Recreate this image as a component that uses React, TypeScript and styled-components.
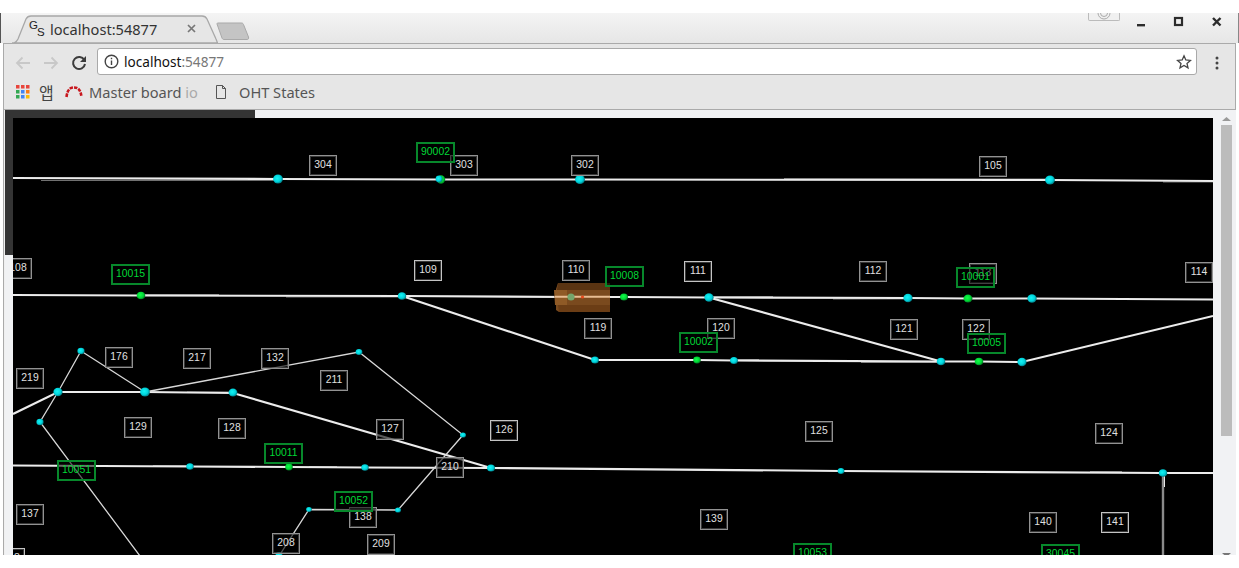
import styled, { createGlobalStyle } from "styled-components";

const GlobalStyle = createGlobalStyle`
  html, body {
    margin: 0;
    padding: 0;
    background: #fff;
    overflow: hidden;
  }
  * { box-sizing: border-box; }
`;

const Page = styled.div`
  width: 1239px;
  height: 568px;
  padding-top: 13px;
  background: #fff;
  font-family: "Noto Sans", "Noto Sans CJK KR", sans-serif;
`;

const TitleBar = styled.div`
  position: relative;
  height: 30px;
  display: flex;
  align-items: flex-end;
  padding-left: 11px;
  background: linear-gradient(#f4f4f4, #e6e6e6);
  border-left: 1px solid #555;
  border-right: 1px solid #888;
`;

const Tab = styled.div`
  position: relative;
  width: 206px;
  height: 30px;
  display: flex;
  align-items: center;
  padding: 0 0 0 17px;
`;

const TabShape = styled.svg`
  position: absolute;
  left: 0;
  top: 0;
`;

const Favicon = styled.div`
  position: relative;
  width: 21px;
  height: 24px;
  font: 11.5px "Liberation Sans", sans-serif;
  color: #222;
`;

const FaviconLetter = styled.span<{ $low?: boolean }>`
  position: absolute;
  left: ${(p) => (p.$low ? 8 : 0)}px;
  top: ${(p) => (p.$low ? 10 : 3)}px;
`;

const TabTitle = styled.span`
  position: relative;
  font-size: 14.6px;
  line-height: 20px;
  color: #333;
  width: 137px;
  margin-top: 1px;
`;

const TabClose = styled.svg`
  position: relative;
`;

const NewTab = styled.svg`
  margin: 0 0 2px -4px;
`;

const HiddenPopup = styled.div`
  position: absolute;
  left: 1087px;
  top: 0;
  width: 32px;
  height: 8px;
  background: #f0f0f0;
  border: 1px solid #bbb;
  border-top: none;
  border-radius: 0 0 2px 2px;
  overflow: hidden;
  display: flex;
  justify-content: center;
`;

const WindowControls = styled.div`
  position: absolute;
  left: 1129px;
  top: 3px;
  display: flex;
  gap: 16px;
`;

const Toolbar = styled.div`
  height: 38px;
  margin: 0 3px;
  display: flex;
  align-items: center;
  background: #e6e6e6;
  border-left: 1px solid #aaa;
  border-right: 1px solid #aaa;
  border-top: 1px solid #aaa;
  padding-left: 11px;
  gap: 12px;
`;

const NavIcon = styled.svg`
  flex: none;
`;

const MenuDots = styled(NavIcon)`
  margin-left: 6px;
`;

const UrlBox = styled.div`
  width: 1100px;
  height: 27px;
  margin: 0 0 2px -2px;
  display: flex;
  align-items: center;
  background: #fff;
  border: 1px solid #a9a9a9;
  border-radius: 3px;
  padding: 0 4px 0 6px;
`;

const UrlText = styled.div`
  flex: 1;
  margin-left: 5px;
  font-size: 13.6px;
  color: #111;
`;

const UrlPort = styled.span`
  color: #777;
`;

const BookmarkBar = styled.div`
  height: 29px;
  margin: 0 3px;
  display: flex;
  align-items: center;
  background: #e6e6e6;
  border-left: 1px solid #aaa;
  border-right: 1px solid #aaa;
  border-bottom: 1px solid #aaa;
  padding: 0 0 6px 12px;
`;

const BookmarkLabel = styled.span<{ $w: number; $gap: number }>`
  display: block;
  width: ${(p) => p.$w}px;
  margin-left: ${(p) => p.$gap}px;
  font-size: 14.6px;
  color: #555;
  white-space: nowrap;
  overflow: hidden;
`;

const AppsLabel = styled.span`
  width: 26px;
  margin-left: 9px;
  font: 16px "Noto Sans CJK KR", sans-serif;
  color: #444;
`;

const FadedText = styled.span`
  color: #aaa;
`;

const Viewport = styled.div`
  display: grid;
  grid-template-columns: 1px 1px 8px 1200px 23px;
  grid-template-rows: 8px 437px;
  margin-left: 3px;
  width: 1233px;
  height: 445px;
`;

const EdgeLine = styled.div`
  grid-row: 1 / 3;
  background: #aaa;
`;

const EdgeGap = styled.div`
  grid-row: 1 / 3;
  background: #efefef;
`;

const TopRail = styled.div`
  grid-column: 3 / 5;
  background: linear-gradient(to right, #343434 250px, #f1f2f4 250px);
`;

const LeftRail = styled.div`
  background: linear-gradient(#343434 137px, #f1f2f4 137px);
`;

const Canvas = styled.div`
  position: relative;
  overflow: hidden;
  background: #000;
`;

const Tracks = styled.svg`
  position: absolute;
  left: 0;
  top: 0;
`;

const Tag = styled.div<{ $x: number; $y: number; $bright?: boolean }>`
  position: absolute;
  left: ${(p) => p.$x - 13}px;
  top: ${(p) => p.$y - 118}px;
  width: 28px;
  height: 21px;
  text-align: center;
  font: 10.4px/17px "Liberation Sans", sans-serif;
  color: #e0e0e0;
  background: rgba(0, 0, 0, 0.62);
  border: 1px solid ${(p) => (p.$bright ? "#c4c4c4" : "#929292")};
  box-shadow: inset 0 0 0 1px rgba(140, 140, 140, 0.4);
`;

const GreenTag = styled(Tag)`
  width: 39px;
  color: #00d836;
  border: 2px solid #07882b;
  line-height: 16px;
  box-shadow: none;
  background: rgba(0, 0, 0, 0.55);
`;

const Scrollbar = styled.div`
  grid-row: 1 / 3;
  grid-column: 5;
  display: flex;
  flex-direction: column;
  align-items: center;
  background: #f1f2f4;
  padding: 7px 0 0 3px;
`;

const ScrollThumb = styled.div`
  width: 11px;
  height: 311px;
  margin-top: 4px;
  background: #bcbcbc;
`;

const ScrollDown = styled.svg`
  margin-top: auto;
`;

const tags: [string, number, number, boolean?][] = [
  ["304", 309, 155],
  ["303", 450, 155],
  ["302", 571, 155],
  ["105", 979, 156],
  ["108", 4, 258],
  ["109", 414, 260, true],
  ["110", 562, 260],
  ["111", 684, 261, true],
  ["112", 859, 261],
  ["113", 969, 263],
  ["114", 1185, 262],
  ["119", 584, 318],
  ["120", 707, 318],
  ["121", 890, 319],
  ["122", 962, 319],
  ["176", 105, 347],
  ["217", 183, 348],
  ["132", 261, 348],
  ["219", 16, 368],
  ["211", 320, 370],
  ["129", 124, 417],
  ["128", 218, 418],
  ["127", 376, 419],
  ["126", 490, 420, true],
  ["125", 805, 421],
  ["124", 1095, 423],
  ["210", 436, 457],
  ["137", 16, 504],
  ["138", 349, 507],
  ["139", 700, 509],
  ["140", 1029, 512],
  ["141", 1101, 512, true],
  ["208", 272, 533],
  ["209", 367, 534],
  ["218", -3, 548, true],
];

const greenTags: [string, number, number][] = [
  ["90002", 416, 142],
  ["10015", 111, 264],
  ["10008", 605, 266],
  ["10001", 956, 267],
  ["10002", 679, 332],
  ["10005", 967, 333],
  ["10011", 264, 443],
  ["10051", 57, 460],
  ["10052", 334, 491],
  ["10053", 793, 543],
  ["30045", 1041, 544],
];

// thick white runs
const mainLines = [
  "13,178 278,179 440,179.5 580,179.5 1050,180 1213,181",
  "13,295 141,295.5 402,296 571,297 624,297 709,297.5 908,298 968,298.5 1032,298.5 1213,299.5",
  "402,296 595,360 697,360 734,360.5 941,361.5 979,361.5 1022,362 1213,316",
  "709,297.5 941,361.5",
  "13,465.5 190,466.5 289,467 365,467.5 491,468 841,471 1163,473 1213,473",
  "13,414 58,392 145,392 233,393 491,468",
];

const thinLines = [
  "81,351 145,392",
  "81,351 58,392 40,422 140,556",
  "145,392 359,352 463,435 398,510 309,509.5 279,556",
];

// grey doubling where two segments do not quite meet
const ghostLines = [
  "41,180.5 278,180.5",
  "784,178.5 1050,179",
  "1163,182 1213,182",
  "141,294.5 219,294.5",
  "286,297 402,297",
  "709,296.5 773,296.5",
  "833,299 908,299",
  "734,359.5 759,359.5",
  "861,362.5 941,362.5",
  "153,465.5 190,465.5",
  "309,466.5 337,466.5",
  "1090,471.5 1122,471.5",
  "187,392 233,392",
];

const cyanNodes: [number, number, number][] = [
  [278, 179, 4.5],
  [580, 179.5, 4.5],
  [1050, 180, 4.5],
  [402, 296, 3.8],
  [709, 297.5, 4.2],
  [908, 298, 4.2],
  [1032, 298.5, 4.2],
  [595, 360, 3.5],
  [734, 360.5, 3.5],
  [941, 361.5, 3.8],
  [1022, 362, 4.2],
  [190, 466.5, 3.3],
  [365, 467.5, 3.3],
  [491, 468, 3.6],
  [841, 471, 3],
  [1163, 473, 3.8],
  [58, 392, 4.2],
  [145, 392, 4.5],
  [233, 392.5, 4],
  [81, 351, 3.2],
  [40, 422, 3.2],
  [359, 352, 3],
  [463, 435, 2.6],
  [398, 510, 2.6],
  [309, 509.5, 2.4],
  [279, 555, 3],
];

const greenNodes: [number, number, number][] = [
  [141, 295.5, 3.8],
  [624, 297, 3.6],
  [968, 298.5, 4],
  [697, 360, 3.4],
  [979, 361.5, 3.8],
  [289, 467, 3.4],
];

function Bookmarks() {
  return (
    <BookmarkBar>
      <svg width="14" height="14" viewBox="0 0 14 14">
        <rect x="0" y="0" width="3.5" height="3.5" fill="#e8453c" />
        <rect x="5" y="0" width="3.5" height="3.5" fill="#e8453c" />
        <rect x="10" y="0" width="3.5" height="3.5" fill="#e8453c" />
        <rect x="0" y="5" width="3.5" height="3.5" fill="#34a853" />
        <rect x="5" y="5" width="3.5" height="3.5" fill="#4285f4" />
        <rect x="10" y="5" width="3.5" height="3.5" fill="#fa7b17" />
        <rect x="0" y="10" width="3.5" height="3.5" fill="#34a853" />
        <rect x="5" y="10" width="3.5" height="3.5" fill="#4285f4" />
        <rect x="10" y="10" width="3.5" height="3.5" fill="#fbbc05" />
      </svg>
      <AppsLabel>앱</AppsLabel>
      <svg width="18" height="12" viewBox="0 0 18 12" fill="none">
        <path
          d="M1.5 11 C2.5 2.5 6 1.5 9 1.5 C12 1.5 15.5 2.5 16.5 11"
          stroke="#c8161d"
          strokeWidth="2.6"
          strokeDasharray="3.4 1.1"
        />
      </svg>
      <BookmarkLabel $w={126} $gap={6}>
        Master board <FadedText>io</FadedText>
      </BookmarkLabel>
      <svg width="12" height="16" viewBox="0 0 12 16" fill="none" stroke="#555">
        <path d="M1.5 1.5 H7.5 L10.5 4.5 V14.5 H1.5 Z M7.5 1.5 V4.5 H10.5" />
      </svg>
      <BookmarkLabel $w={90} $gap={12}>
        OHT States
      </BookmarkLabel>
    </BookmarkBar>
  );
}

function Chrome() {
  return (
    <>
      <TitleBar>
        <Tab>
          <TabShape width="206" height="30" viewBox="0 0 206 30">
            <path
              d="M0 30 C4 30 5 28 6 26 L14 6 C15 4 16 3 19 3 H190 C193 3 194 4 195 6 L204 26 C205 28 205 30 206 30 Z"
              fill="#e6e6e6"
              stroke="#a8a8a8"
              strokeWidth="1.3"
            />
          </TabShape>
          <Favicon>
            <FaviconLetter>G</FaviconLetter>
            <FaviconLetter $low>S</FaviconLetter>
          </Favicon>
          <TabTitle>localhost:54877</TabTitle>
          <TabClose width="9" height="9" viewBox="0 0 9 9">
            <path d="M1 1 L8 8 M8 1 L1 8" stroke="#777" strokeWidth="1.7" />
          </TabClose>
        </Tab>
        <NewTab width="36" height="20" viewBox="0 0 36 20">
          <path
            d="M3 3 C3 2 3 2 5 2 H27 C28 2 29 2 29.5 3.5 L34.5 16 C35 18 34 18.5 33 18.5 H10 C9 18.5 8.5 18 8 17 Z"
            fill="#c4c4c4"
            stroke="#a9a9a9"
          />
        </NewTab>
        <HiddenPopup>
          <svg width="16" height="7" viewBox="0 0 16 7" fill="none" stroke="#aaa">
            <circle cx="8" cy="0" r="6" />
            <circle cx="8" cy="0" r="3.5" />
          </svg>
        </HiddenPopup>
        <WindowControls>
          <svg width="22" height="14" viewBox="0 0 22 14">
            <rect x="7" y="8" width="8" height="2.4" fill="#2c2c2c" />
          </svg>
          <svg width="22" height="14" viewBox="0 0 22 14">
            <rect x="7" y="2" width="7" height="7" fill="none" stroke="#2c2c2c" strokeWidth="2.2" />
          </svg>
          <svg width="22" height="14" viewBox="0 0 22 14">
            <path d="M7 2 L14.5 9.5 M14.5 2 L7 9.5" stroke="#2c2c2c" strokeWidth="2.4" />
          </svg>
        </WindowControls>
      </TitleBar>
      <Toolbar>
        <NavIcon width="16" height="14" viewBox="0 0 16 14" fill="none" stroke="#c8c8c8" strokeWidth="1.8">
          <path d="M15 7 H2 M7.5 1.5 L2 7 L7.5 12.5" />
        </NavIcon>
        <NavIcon width="16" height="14" viewBox="0 0 16 14" fill="none" stroke="#c8c8c8" strokeWidth="1.8">
          <path d="M1 7 H14 M8.5 1.5 L14 7 L8.5 12.5" />
        </NavIcon>
        <NavIcon width="16" height="16" viewBox="0 0 16 16">
          <path
            d="M13.3 5 A6 6 0 1 0 14 9"
            fill="none"
            stroke="#3c3c3c"
            strokeWidth="2"
          />
          <path d="M15 1 V7 H9 Z" fill="#3c3c3c" />
        </NavIcon>
        <UrlBox>
          <svg width="15" height="15" viewBox="0 0 15 15" fill="none" stroke="#444" strokeWidth="1.4">
            <circle cx="7.5" cy="7.5" r="6.3" />
            <path d="M7.5 6.5 V11 M7.5 3.8 V5.2" />
          </svg>
          <UrlText>
            localhost<UrlPort>:54877</UrlPort>
          </UrlText>
          <svg width="16" height="16" viewBox="0 0 16 16" fill="none" stroke="#444" strokeWidth="1.3">
            <path d="M8 1.8 L9.8 6 L14.4 6.4 L11 9.4 L12 13.9 L8 11.5 L4 13.9 L5 9.4 L1.6 6.4 L6.2 6 Z" />
          </svg>
        </UrlBox>
        <MenuDots width="4" height="14" viewBox="0 0 4 14">
          <circle cx="2" cy="2" r="1.5" fill="#444" />
          <circle cx="2" cy="7" r="1.5" fill="#444" />
          <circle cx="2" cy="12" r="1.5" fill="#444" />
        </MenuDots>
      </Toolbar>
      <Bookmarks />
    </>
  );
}

function Diagram() {
  return (
    <Tracks width="1200" height="437" viewBox="13 118 1200 437" fill="none">
      <defs>
        <radialGradient id="cyanBall" cx="0.42" cy="0.42" r="0.62">
          <stop offset="0" stopColor="#14f4f4" />
          <stop offset="0.6" stopColor="#00d4dc" />
          <stop offset="1" stopColor="#016f78" />
        </radialGradient>
        <radialGradient id="greenBall" cx="0.42" cy="0.42" r="0.62">
          <stop offset="0" stopColor="#10ff48" />
          <stop offset="0.6" stopColor="#00d836" />
          <stop offset="1" stopColor="#026f20" />
        </radialGradient>
      </defs>
      {ghostLines.map((points) => (
        <polyline key={points} points={points} stroke="#707070" strokeWidth="1" />
      ))}
      {mainLines.map((points) => (
        <polyline key={points} points={points} stroke="#ececec" strokeWidth="2.1" />
      ))}
      {thinLines.map((points) => (
        <polyline key={points} points={points} stroke="#d8d8d8" strokeWidth="1.3" />
      ))}
      <path d="M1163 474 V556" stroke="#8a8a8a" strokeWidth="2.4" />
      <path d="M1164.5 475 V487" stroke="#e8e8e8" strokeWidth="1" />
      {/* the vehicle on the rail */}
      <path d="M556 289 L558 283 H610 V312 H559 L556 310 Z" fill="#7a4a1e" />
      <path d="M558 283 H610 V290 H557 Z" fill="#5a3412" />
      <path d="M554 290 H567 V305 H555 Z" fill="#8f5a26" />
      <path d="M558 305 H610 V312 H559 Z" fill="#6b3d15" />
      <path d="M555 296.8 H610" stroke="#e8bd92" strokeWidth="2" />
      <circle cx="571" cy="297" r="3.6" fill="#74a66c" />
      <circle cx="582.5" cy="297" r="1.6" fill="#e84a1c" />
      {cyanNodes.map(([cx, cy, r]) => (
        <ellipse key={`${cx}-${cy}`} cx={cx} cy={cy} rx={r + 0.4} ry={r} fill="url(#cyanBall)" />
      ))}
      {greenNodes.map(([cx, cy, r]) => (
        <ellipse key={`${cx}-${cy}`} cx={cx} cy={cy} rx={r + 0.4} ry={r} fill="url(#greenBall)" />
      ))}
      <circle cx="441" cy="179.5" r="4.2" fill="url(#greenBall)" />
      <circle cx="439" cy="179" r="3.4" fill="url(#cyanBall)" />
    </Tracks>
  );
}

export default function App() {
  return (
    <Page>
      <GlobalStyle />
      <Chrome />
      <Viewport>
        <EdgeLine />
        <EdgeGap />
        <TopRail />
        <Scrollbar>
          <svg width="9" height="4" viewBox="0 0 9 4">
            <path d="M4.5 0 L9 4 H0 Z" fill="#999" />
          </svg>
          <ScrollThumb />
          <ScrollDown width="9" height="2" viewBox="0 0 9 2">
            <path d="M0 0 H9 L4.5 4 Z" fill="#777" />
          </ScrollDown>
        </Scrollbar>
        <LeftRail />
        <Canvas>
          <Diagram />
          {tags.map(([name, x, y, bright]) => (
            <Tag key={name} $x={x} $y={y} $bright={bright}>
              {name}
            </Tag>
          ))}
          {greenTags.map(([name, x, y]) => (
            <GreenTag key={name} $x={x} $y={y}>
              {name}
            </GreenTag>
          ))}
        </Canvas>
      </Viewport>
    </Page>
  );
}
